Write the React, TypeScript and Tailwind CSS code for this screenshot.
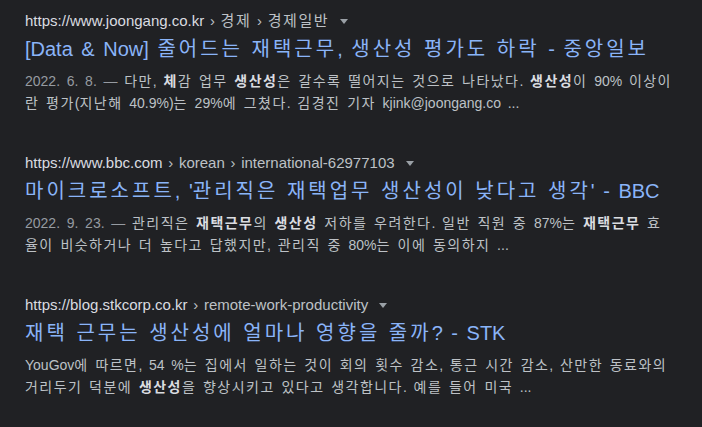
const font = {
  fontFamily: '"Liberation Sans", "Noto Sans CJK KR", Arial, sans-serif',
};

type Part = { t: string; b?: boolean };

type Result = {
  domain: string;
  crumbs: string[];
  title: string;
  date?: string;
  lines: Part[][];
};

const results: Result[] = [
  {
    domain: "https://www.joongang.co.kr",
    crumbs: ["경제", "경제일반"],
    title: "[Data & Now] 줄어드는 재택근무, 생산성 평가도 하락 - 중앙일보",
    date: "2022. 6. 8. — ",
    lines: [
      [
        { t: "다만, " },
        { t: "체", b: true },
        { t: "감 업무 " },
        { t: "생산성", b: true },
        { t: "은 갈수록 떨어지는 것으로 나타났다. " },
        { t: "생산성", b: true },
        { t: "이 90% 이상이" },
      ],
      [{ t: "란 평가(지난해 40.9%)는 29%에 그쳤다. 김경진 기자 kjink@joongang.co ..." }],
    ],
  },
  {
    domain: "https://www.bbc.com",
    crumbs: ["korean", "international-62977103"],
    title: "마이크로소프트, '관리직은 재택업무 생산성이 낮다고 생각' - BBC",
    date: "2022. 9. 23. — ",
    lines: [
      [
        { t: "관리직은 " },
        { t: "재택근무", b: true },
        { t: "의 " },
        { t: "생산성", b: true },
        { t: " 저하를 우려한다. 일반 직원 중 87%는 " },
        { t: "재택근무", b: true },
        { t: " 효" },
      ],
      [{ t: "율이 비슷하거나 더 높다고 답했지만, 관리직 중 80%는 이에 동의하지 ..." }],
    ],
  },
  {
    domain: "https://blog.stkcorp.co.kr",
    crumbs: ["remote-work-productivity"],
    title: "재택 근무는 생산성에 얼마나 영향을 줄까? - STK",
    lines: [
      [{ t: "YouGov에 따르면, 54 %는 집에서 일하는 것이 회의 횟수 감소, 통근 시간 감소, 산만한 동료와의" }],
      [
        { t: "거리두기 덕분에 " },
        { t: "생산성", b: true },
        { t: "을 향상시키고 있다고 생각합니다. 예를 들어 미국 ..." },
      ],
    ],
  },
];

// Hangul runs get a little extra advance so the lines run as wide as the shot
function Ko({ text, track }: { text: string; track: string }) {
  const parts = text.split(/([\uAC00-\uD7A3]+)/);
  return (
    <>
      {parts.map((p, i) =>
        i % 2 === 1 ? (
          <span key={i} className={track}>
            {p}
          </span>
        ) : (
          p
        )
      )}
    </>
  );
}

function ResultItem({ r }: { r: Result }) {
  const small = "tracking-[0.105em]";
  return (
    <div className="flex flex-col">
      <div className="h-[18px] text-[15px] leading-[18px] whitespace-nowrap [word-spacing:0.1em]">
        <span className="text-[#dadce0]">{r.domain}</span>
        {r.crumbs.map((c) => (
          <span key={c} className="text-[#bdc1c6]">
            {" › "}
            <Ko text={c} track={small} />
          </span>
        ))}
        <svg
          width="8"
          height="5"
          viewBox="0 0 8 5"
          className="inline-block ml-[11px] align-[2px]"
        >
          <path d="M0 0h8L4 5z" fill="#9aa0a6" />
        </svg>
      </div>
      <div className="mt-[6px] h-[26px] text-[20px] leading-[26px] text-[#8ab4f8] whitespace-nowrap [word-spacing:0.15em]">
        <Ko text={r.title} track="tracking-[0.15em]" />
      </div>
      <div className="mt-[8px] text-[14px] leading-[22px] text-[#bdc1c6] [word-spacing:0.2em]">
        {r.lines.map((line, i) => (
          <div key={i} className="h-[22px] whitespace-nowrap">
            {i === 0 && r.date && <span className="text-[#969ba1]">{r.date}</span>}
            {line.map((p, j) =>
              p.b ? (
                <b key={j} className="font-bold text-[#dadce0]">
                  <Ko text={p.t} track={small} />
                </b>
              ) : (
                <span key={j}>
                  <Ko text={p.t} track={small} />
                </span>
              )
            )}
          </div>
        ))}
      </div>
    </div>
  );
}

export default function App() {
  return (
    <div
      className="w-[702px] h-[427px] bg-[#202124] overflow-hidden pl-[25px] pt-[12px] flex flex-col gap-[40px]"
      style={font}
    >
      {results.map((r) => (
        <ResultItem key={r.domain} r={r} />
      ))}
    </div>
  );
}
